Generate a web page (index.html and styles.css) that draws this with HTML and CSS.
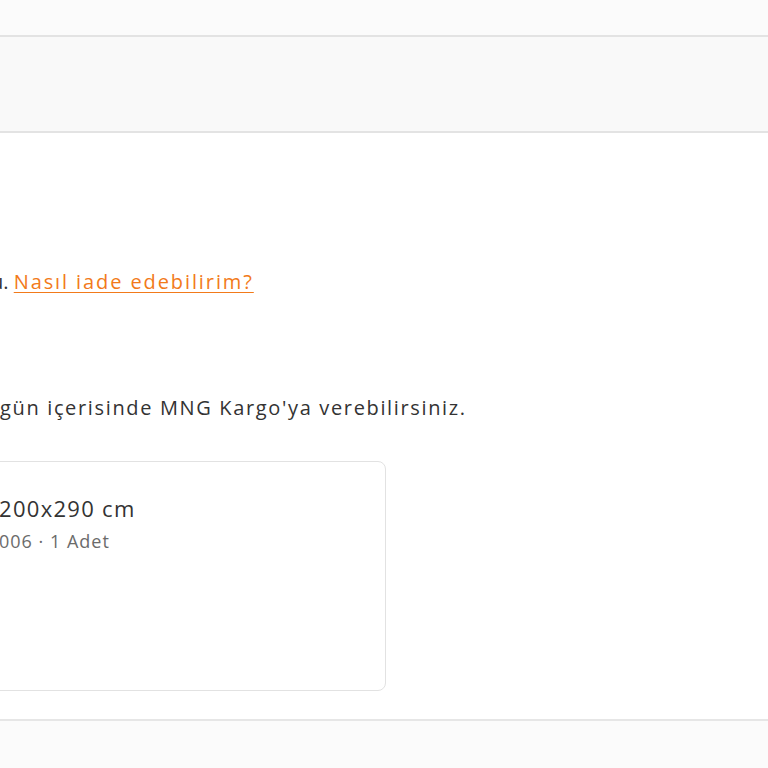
FILE: index.html
```html
<!DOCTYPE html>
<html lang="tr">
<head>
<meta charset="utf-8">
<title>İade</title>
<link rel="stylesheet" href="styles.css">
</head>
<body>
<div class="topbar"></div>
<div class="subbar"></div>
<main class="content">
  <p class="info"><span class="cut">u. </span><a class="link" href="#">Nasıl iade edebilirim?</a></p>
  <p class="note">gün içerisinde MNG Kargo'ya verebilirsiniz.</p>
  <div class="card">
    <div class="card-body">
      <div class="title">200x290 cm</div>
      <div class="meta">006 · 1 Adet</div>
    </div>
  </div>
</main>
<div class="footer"></div>
</body>
</html>
```
FILE: styles.css
```css
html, body {
  margin: 0;
  padding: 0;
  background: #ffffff;
  overflow: hidden;
  width: 768px;
  height: 768px;
}
body {
  font-family: "Open Sans", Lato, sans-serif;
  color: #333333;
}
.topbar {
  height: 35px;
  background: #fbfbfb;
  border-bottom: 2px solid #e3e3e3;
}
.subbar {
  height: 94px;
  background: #f9f9f9;
  border-bottom: 2px solid #e3e3e3;
}
.content {
  height: 586px;
  padding-top: 1px;
  box-sizing: border-box;
  display: flex;
  flex-direction: column;
}
.info {
  margin: 133px 0 0 -9px;
  font-size: 20px;
  line-height: 30px;
}
.cut {
  color: #333333;
  letter-spacing: 0;
}
.link {
  color: #f27a1a;
  letter-spacing: 1.9px;
  text-decoration: underline;
  text-underline-offset: 3px;
  text-decoration-thickness: 1px;
}
.note {
  margin: 96px 0 0 0;
  font-size: 20px;
  line-height: 30px;
  letter-spacing: 1.65px;
}
.card {
  margin: 38px 0 0 -30px;
  width: 416px;
  height: 230px;
  box-sizing: border-box;
  border: 1px solid #e2e2e2;
  border-radius: 8px;
  background: #ffffff;
}
.card-body {
  padding: 31px 0 0 28px;
}
.title {
  font-size: 22px;
  line-height: 30px;
  color: #333333;
  letter-spacing: 1.3px;
}
.meta {
  margin-top: 6px;
  font-size: 18px;
  line-height: 24px;
  color: #6b6b6b;
  letter-spacing: 1px;
}
.footer {
  height: 49px;
  background: #fbfbfb;
  border-top: 2px solid #e6e6e6;
}
```
